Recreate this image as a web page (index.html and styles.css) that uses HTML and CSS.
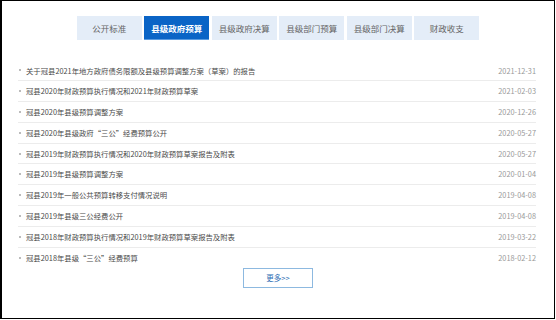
FILE: index.html
```html
<!DOCTYPE html>
<html lang="zh-CN">
<head>
    <meta charset="UTF-8">
    <meta name="viewport" content="width=device-width, initial-scale=1.0">
    <title>县级政府预算</title>
    <link rel="stylesheet" href="styles.css">
</head>
<body>
    <div class="frame">
        <!-- Tab bar -->
        <div class="tabs">
            <a class="tab" href="#">公开标准</a>
            <a class="tab active" href="#">县级政府预算</a>
            <a class="tab" href="#">县级政府决算</a>
            <a class="tab" href="#">县级部门预算</a>
            <a class="tab" href="#">县级部门决算</a>
            <a class="tab" href="#">财政收支</a>
        </div>

        <!-- Article list -->
        <ul class="news-list">
            <li><a href="#">关于冠县2021年地方政府债务限额及县级预算调整方案（草案）的报告</a><span class="date">2021-12-31</span></li>
            <li><a href="#">冠县2020年财政预算执行情况和2021年财政预算草案</a><span class="date">2021-02-03</span></li>
            <li><a href="#">冠县2020年县级预算调整方案</a><span class="date">2020-12-26</span></li>
            <li><a href="#">冠县2020年县级政府“三公”经费预算公开</a><span class="date">2020-05-27</span></li>
            <li><a href="#">冠县2019年财政预算执行情况和2020年财政预算草案报告及附表</a><span class="date">2020-05-27</span></li>
            <li><a href="#">冠县2019年县级预算调整方案</a><span class="date">2020-01-04</span></li>
            <li><a href="#">冠县2019年一般公共预算转移支付情况说明</a><span class="date">2019-04-08</span></li>
            <li><a href="#">冠县2019年县级三公经费公开</a><span class="date">2019-04-08</span></li>
            <li><a href="#">冠县2018年财政预算执行情况和2019年财政预算草案报告及附表</a><span class="date">2019-03-22</span></li>
            <li><a href="#">冠县2018年县级“三公”经费预算</a><span class="date">2018-02-12</span></li>
        </ul>

        <a class="more" href="#">更多&gt;&gt;</a>
    </div>
</body>
</html>
```

FILE: styles.css
```css
body {
    margin: 0;
    font-family: "Noto Sans CJK SC", "Noto Sans", sans-serif;
    background-color: #fff;
}
a {
    text-decoration: none;
}
.frame {
    width: 552px;
    height: 317px;
    border: 1px solid #000;
    border-left-width: 2px;
    background-color: #fff;
}

/* Tabs */
.tabs {
    display: flex;
    justify-content: center;
    gap: 2.5px;
    padding-top: 15px;
}
.tab {
    width: 65px;
    height: 24px;
    line-height: 24px;
    text-align: center;
    font-size: 8.5px;
    color: #666;
    background-color: #e4edf8;
}
.tab.active {
    background-color: #0a64c6;
    color: #fff;
    font-weight: bold;
    box-shadow: inset 0 -1px 0 #5a9be0;
}

/* List */
.news-list {
    list-style: none;
    margin: 20.5px 18px 0 16px;
    padding: 0;
}
.news-list li {
    display: flex;
    align-items: center;
    height: 19.8px;
    line-height: 19.8px;
    border-bottom: 1px solid #ececec;
    font-size: 7.35px;
}
.news-list li:last-child {
    border-bottom: none;
}
.news-list li::before {
    content: "";
    width: 2px;
    height: 2px;
    margin: 0 5px 0 1px;
    background-color: #bbb;
}
.news-list li a {
    flex: 1;
    color: #4a4a4a;
}
.date {
    color: #999;
}

/* More button */
.more {
    display: block;
    width: 68px;
    height: 18px;
    line-height: 18px;
    margin: 0.5px auto 0;
    border: 1px solid #8db9e0;
    text-align: center;
    font-size: 7.5px;
    color: #2b6cb3;
}
```
